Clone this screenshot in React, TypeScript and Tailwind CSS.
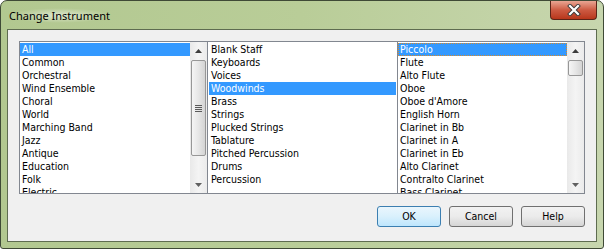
import React from "react";

const list1 = ["All","Common","Orchestral","Wind Ensemble","Choral","World","Marching Band","Jazz","Antique","Education","Folk","Electric"];
const list2 = ["Blank Staff","Keyboards","Voices","Woodwinds","Brass","Strings","Plucked Strings","Tablature","Pitched Percussion","Drums","Percussion"];
const list3 = ["Piccolo","Flute","Alto Flute","Oboe","Oboe d'Amore","English Horn","Clarinet in Bb","Clarinet in A","Clarinet in Eb","Alto Clarinet","Contralto Clarinet","Bass Clarinet"];

function Arrow({ up }: { up: boolean }) {
  return (
    <div className="h-[17px] flex items-center justify-center">
      <svg width="7" height="4" viewBox="0 0 7 4">
        {up ? <polygon points="0,4 7,4 3.5,0" fill="#3c3c3c" /> : <polygon points="0,0 7,0 3.5,4" fill="#606060" />}
      </svg>
    </div>
  );
}

function Thumb({ h }: { h: number }) {
  return (
    <div
      className="mx-[1px] rounded-[2px] border border-[#979797] bg-gradient-to-r from-[#f5f5f5] via-[#e6e6e6] to-[#d4d4d4] flex flex-col items-center justify-center gap-[1px]"
      style={{ height: h }}
    >
      {h > 30 && (
        <>
          <div className="w-[7px] h-[1px] bg-[#5a5a5a]" />
          <div className="w-[7px] h-[1px] bg-[#5a5a5a]" />
          <div className="w-[7px] h-[1px] bg-[#5a5a5a]" />
          <div className="w-[7px] h-[1px] bg-[#5a5a5a]" />
        </>
      )}
    </div>
  );
}

function Scrollbar({ thumb }: { thumb: number }) {
  return (
    <div className="w-[17px] h-full flex flex-col bg-gradient-to-r from-[#e9e9e9] via-[#f4f4f4] to-[#ebebeb] shrink-0">
      <Arrow up />
      <div className="flex-1 pt-[1px]">
        <Thumb h={thumb} />
      </div>
      <Arrow up={false} />
    </div>
  );
}

function Items({ items, sel, focus, pl }: { items: string[]; sel: number; focus?: boolean; pl: string }) {
  return (
    <div className="flex-1 h-full overflow-hidden pt-[1px] bg-white">
      {items.map((t, i) => (
        <div
          key={t}
          className={
            "h-[13px] leading-[13px] whitespace-nowrap " +
            pl +
            (i === sel
              ? focus
                ? " bg-[#3399ff] text-white outline outline-1 outline-dotted outline-[#d98a2b] -outline-offset-1"
                : " bg-[#3399ff] text-white"
              : " text-black")
          }
        >
          {t}
        </div>
      ))}
    </div>
  );
}

function Btn({ label, def }: { label: string; def?: boolean }) {
  return (
    <div
      className={
        "w-[64px] h-[21px] rounded-[3px] border flex items-center justify-center text-black " +
        (def
          ? "border-[#3c7fb1] bg-gradient-to-b from-[#eaf6fd] via-[#d9f0fc] to-[#bee6fd]"
          : "border-[#707070] bg-gradient-to-b from-[#f2f2f2] via-[#ebebeb] to-[#d5d5d5]")
      }
    >
      {label}
    </div>
  );
}

export default function App() {
  return (
    <div
      className="w-[604px] h-[249px] border border-[#3f4a36] rounded-t-[7px] rounded-b-[3px] px-[6px] pb-[6px] flex flex-col bg-gradient-to-r from-[#b2c890] via-[#b9cd98] to-[#c7d6ae]"
      style={{ fontFamily: '"DejaVu Sans Condensed", "Liberation Sans", Arial, sans-serif' }}
    >
      <div className="h-[28px] flex items-start justify-between shrink-0">
        <div className="mt-[7px] ml-[1px] px-[1px] text-[11px] leading-[15px] text-black bg-[radial-gradient(ellipse_at_center,rgba(255,255,255,0.55),rgba(255,255,255,0)_70%)]" style={{ fontFamily: '"Noto Sans", "Liberation Sans", sans-serif' }}>
          Change Instrument
        </div>
        <div className="w-[47px] h-[19px] rounded-b-[4px] border border-t-0 border-[#5a2418] bg-gradient-to-b from-[#e8a593] via-[#cc5a42] to-[#b8361a] flex items-center justify-center">
          <svg width="14" height="12" viewBox="0 0 14 12">
            <path d="M3 2 L11 10 M11 2 L3 10" stroke="#3a3a3a" strokeWidth="4" strokeLinecap="square" />
            <path d="M3 2 L11 10 M11 2 L3 10" stroke="#ffffff" strokeWidth="2.2" strokeLinecap="square" />
          </svg>
        </div>
      </div>
      <div className="flex-1 border border-[#5e6c50] bg-[#f0f0f0] p-[11px] pb-[14px] flex flex-col text-[10.5px]">
        <div className="h-[153px] border border-[#828790] flex bg-white">
          <div className="w-[187px] h-full flex">
            <Items items={list1} sel={0} pl="pl-[2px]" />
            <Scrollbar thumb={96} />
          </div>
          <div className="w-[1px] h-full bg-[#828790]" />
          <div className="w-[189px] h-full flex px-[1px]">
            <Items items={list2} sel={3} pl="pl-[2px]" />
          </div>
          <div className="w-[1px] h-full bg-[#828790]" />
          <div className="flex-1 h-full flex">
            <Items items={list3} sel={0} focus pl="pl-[2px]" />
            <Scrollbar thumb={16} />
          </div>
        </div>
        <div className="mt-[12px] flex justify-end gap-[8px]">
          <Btn label="OK" def />
          <Btn label="Cancel" />
          <Btn label="Help" />
        </div>
      </div>
    </div>
  );
}
